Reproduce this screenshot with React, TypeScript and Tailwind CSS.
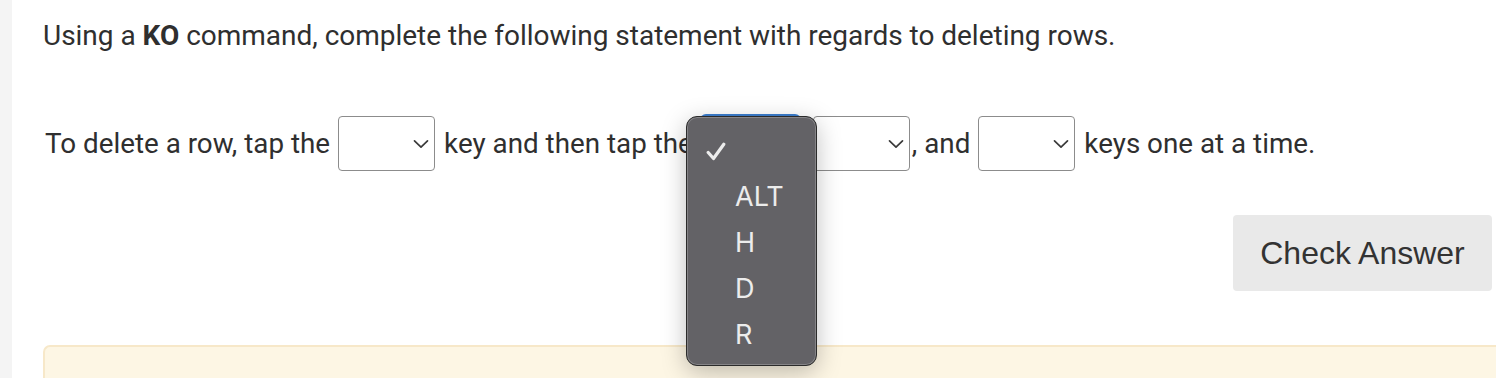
import React from 'react';

const Chevron = () => (
  <svg className="w-[16px] h-[10px]" viewBox="0 0 16 10" fill="none">
    <path d="M1.5 1.8 8 8.2l6.5-6.4" stroke="#3a3a3a" strokeWidth={1.7} strokeLinecap="round" strokeLinejoin="round" />
  </svg>
);

const Select = ({ focused = false }: { focused?: boolean }) => (
  <div
    className={
      'flex items-center justify-end w-[97px] h-[55px] rounded-[4px] bg-white pr-[5px] border-[1.5px] ' +
      (focused ? 'border-[#3d7fcf] ring-2 ring-[#3d7fcf]' : 'border-[#8c8c8c]')
    }
  >
    <Chevron />
  </div>
);

const options = ['ALT', 'H', 'D', 'R'];

export default function App() {
  return (
    <div className="flex min-h-[378px] h-[378px] overflow-hidden bg-white text-[#2f2f2f] font-['Roboto',sans-serif]">
      {/* side strip */}
      <div className="w-[12px] shrink-0 bg-[#f4f4f4]" />

      <div className="flex-1 pl-[31px] pr-[4px] pt-[18px]">
        <p className="text-[28px] leading-[36px] tracking-[-0.02px]">
          Using a <b className="font-bold">KO</b> command, complete the following statement with regards to deleting rows.
        </p>

        {/* statement row */}
        <div className="relative mt-[62px] flex items-center text-[27.8px] pl-[2px]">
          <span>To delete a row, tap the</span>
          <div className="ml-[8px]"><Select /></div>
          <span className="ml-[9px]">key and then tap the</span>
          <div className="ml-[9px]"><Select focused /></div>
          <div className="ml-[14px]"><Select /></div>
          <span className="ml-[2px]">, and</span>
          <div className="ml-[8px]"><Select /></div>
          <span className="ml-[9px]">keys one at a time.</span>

          {/* open dropdown menu */}
          <div className="absolute left-[643px] top-[0px] w-[131px] h-[250px] rounded-[11px] bg-[#636266] border border-[#2b2b2b] shadow-[0_6px_24px_rgba(0,0,0,0.25),inset_0_0_0_1px_rgba(255,255,255,0.22)] font-['Inter',sans-serif] text-[#ececec]">
            <div className="flex flex-col pt-[11px]">
              <div className="h-[46px] flex items-center pl-[19px]">
                <svg className="w-[20px] h-[19px]" viewBox="0 0 20 19" fill="none">
                  <path d="M2.2 10.5 7.5 16.5 17.8 2.2" stroke="#ececec" strokeWidth={3.2} strokeLinecap="round" strokeLinejoin="round" />
                </svg>
              </div>
              {options.map((o) => (
                <div key={o} className="h-[46px] flex items-center pl-[48px] text-[27px]">
                  {o}
                </div>
              ))}
            </div>
          </div>
        </div>

        <div className="flex justify-end mt-[44px]">
          <button className="w-[259px] h-[76px] rounded-[4px] bg-[#e9e9e9] text-[32px] text-[#333] font-['Liberation_Sans',Arial,sans-serif]">
            Check Answer
          </button>
        </div>

        <div className="mt-[54px] -mr-[4px] h-[60px] rounded-tl-[7px] border-t-[2px] border-l-[2px] border-[#f7e8c9] bg-[#fdf6e4]" />
      </div>
    </div>
  );
}
